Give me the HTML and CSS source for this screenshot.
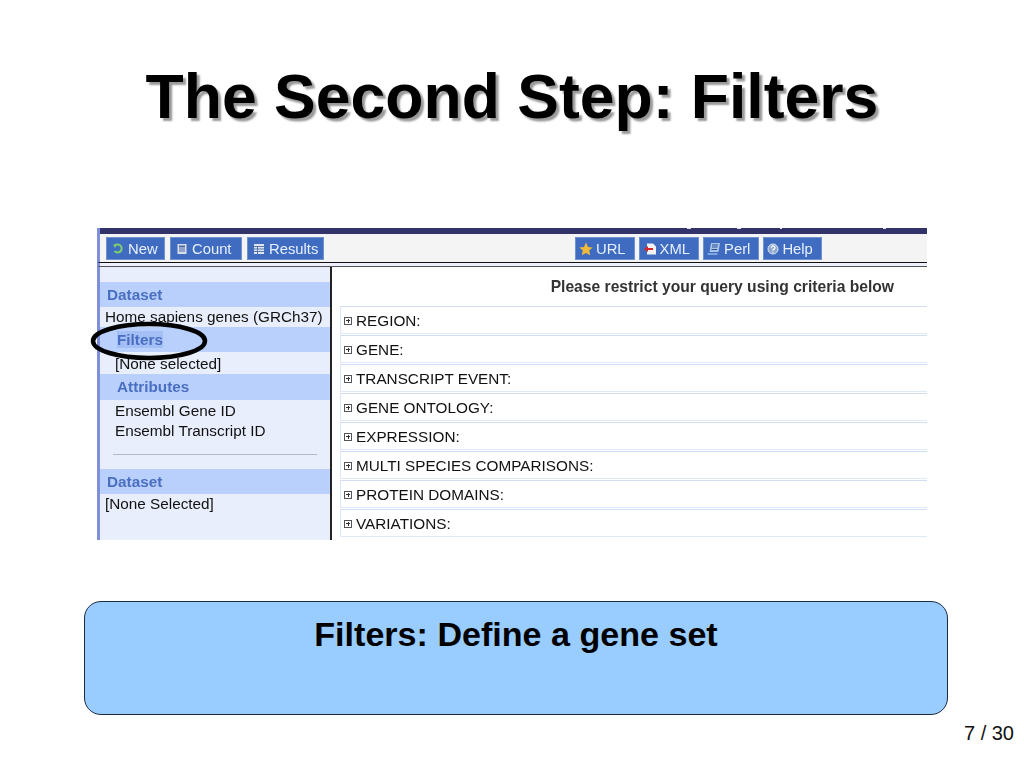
FILE: index.html
```html
<!DOCTYPE html>
<html lang="en">
<head>
  <meta charset="UTF-8" />
  <title>The Second Step: Filters</title>
  <link rel="stylesheet" href="styles.css">
</head>
<body>
  <div class="slide">
    <h1 class="title">The Second Step: Filters</h1>

    <div class="shot">
      <div class="topbar"></div>
      <div class="toolbar">
        <div class="btns">
          <a class="btn btn-new">
            <svg class="ico" viewBox="0 0 12 12"><path d="M3 2.5 A4 4 0 1 1 2.5 8" fill="none" stroke="#7fd06a" stroke-width="2"/><path d="M1 1.5 L5 1.5 L3 5 Z" fill="#7fd06a"/></svg>
            New
          </a>
          <a class="btn btn-count">
            <svg class="ico" viewBox="0 0 12 12"><rect x="1.5" y="1" width="9" height="10" fill="#d8dde8"/><rect x="3" y="2.5" width="6" height="2" fill="#4b6ba8"/><path d="M3 6h6M3 8h6" stroke="#4b6ba8"/></svg>
            Count
          </a>
          <a class="btn btn-results">
            <svg class="ico" viewBox="0 0 12 12"><rect x="1" y="1" width="10" height="10" fill="#dfe4ee"/><path d="M1 3.5h10M1 6h10M1 8.5h10M4.5 3v8" stroke="#5a78b0"/></svg>
            Results
          </a>
        </div>
        <div class="btns btns-right">
          <a class="btn">
            <svg class="ico ico-wide" viewBox="0 0 14 14"><path d="M7 .5 9 5 13.700 5.500 10.200 8.600 11.200 13.300 7 10.900 2.800 13.300 3.800 8.600.3 5.500 5 5Z" fill="#f0b93a"/></svg>
            URL
          </a>
          <a class="btn">
            <svg class="ico ico-wide" viewBox="0 0 14 14"><path d="M4 1.500h6l3 3V12.500H4Z" fill="#f2f2f2"/><path d="M1 7 5 4V10Z M5 6h5v2H5Z" fill="#d8252a"/></svg>
            XML
          </a>
          <a class="btn">
            <svg class="ico ico-wide" viewBox="0 0 14 14"><path d="M4 1h9L11.500 10H2.500Z" fill="#a9c4ea"/><path d="M5 3h6M5 5h5.500M4.500 7.500h5.500" stroke="#2f4f8f"/><path d="M.5 11h10v2H.5Z" fill="#7fa5dc"/></svg>
            Perl
          </a>
          <a class="btn">
            <svg class="ico" viewBox="0 0 12 12"><circle cx="6" cy="6" r="5" fill="#8ea8d0" stroke="#dce5f2"/><path d="M4.300 4.700A1.800 1.800 0 1 1 6 6.500V7.500M6 8.500V9.500" fill="none" stroke="#fff" stroke-width="1.200"/></svg>
            Help
          </a>
        </div>
      </div>
      <div class="strip"></div>

      <div class="cols">
        <div class="side">
          <div class="band band-first">Dataset</div>
          <div class="side-text side-name">Home sapiens genes (GRCh37)</div>
          <div class="band band-sub band-on"><span>Filters</span></div>
          <div class="side-text side-sub side-none">[None selected]</div>
          <div class="band band-sub band-attr">Attributes</div>
          <div class="side-text side-sub side-attr">Ensembl Gene ID<br>Ensembl Transcript ID</div>
          <div class="side-rule"></div>
          <div class="band">Dataset</div>
          <div class="side-text side-name">[None Selected]</div>
        </div>
        <div class="main">
          <div class="restrict">Please restrict your query using criteria below</div>
          <div class="row"><i class="plus"></i>REGION:</div>
          <div class="row"><i class="plus"></i>GENE:</div>
          <div class="row"><i class="plus"></i>TRANSCRIPT EVENT:</div>
          <div class="row"><i class="plus"></i>GENE ONTOLOGY:</div>
          <div class="row"><i class="plus"></i>EXPRESSION:</div>
          <div class="row"><i class="plus"></i>MULTI SPECIES COMPARISONS:</div>
          <div class="row"><i class="plus"></i>PROTEIN DOMAINS:</div>
          <div class="row"><i class="plus"></i>VARIATIONS:</div>
        </div>
      </div>

      <svg class="ring" width="122" height="44" viewBox="0 0 122 44">
        <ellipse cx="61" cy="22" rx="56" ry="17" fill="none" stroke="#000" stroke-width="4.500"/>
      </svg>
    </div>

    <div class="callout">Filters: Define a gene set</div>
    <div class="pagenum">7 / 30</div>
  </div>
</body>
</html>
```

FILE: styles.css
```css
html, body {
  margin: 0;
  padding: 0;
  background-color: #fff;
  color: #000;
  font-family: "Liberation Sans", Arial, sans-serif;
}

.slide {
  width: 1024px;
  height: 768px;
  overflow: hidden;
}

.title {
  margin: 0;
  height: 228px;
  padding-top: 60px;
  box-sizing: border-box;
  font-size: 62.500px;
  line-height: 72px;
  font-weight: bold;
  text-align: center;
  text-shadow: 3px 3px 2px #999;
}

/* browser capture pasted in the slide */
.shot {
  position: relative;
  width: 830px;
  height: 312px;
  margin-left: 97px;
  font-size: 15.300px;
  color: #111;
  filter: blur(0.3px);
}

.topbar {
  height: 6px;
  background-color: #33336b;
  background-image:
    linear-gradient(#dfe0ee, #dfe0ee),
    linear-gradient(#dfe0ee, #dfe0ee),
    linear-gradient(#dfe0ee, #dfe0ee),
    linear-gradient(#dfe0ee, #dfe0ee);
  background-size: 4px 1px, 4px 1px, 2px 1px, 3px 1px;
  background-position: 587px 0, 637px 0, 680px 0, 783px 0;
  background-repeat: no-repeat;
  border-left: 3px solid #7f8fd8;
}

.toolbar {
  display: flex;
  height: 29px;
  padding: 3px 0 0 6px;
  box-sizing: border-box;
  background-color: #f4f4f4;
  border-left: 3px solid #7f8fd8;
  border-bottom: 1px solid #111;
}

.btns {
  display: flex;
  gap: 5px;
}

.btns-right {
  margin-left: 251px;
  gap: 4px;
}

.btn {
  display: flex;
  align-items: center;
  gap: 4px;
  height: 23px;
  padding: 0 0 0 5px;
  box-sizing: border-box;
  background-color: #3f6cc0;
  border: 1px solid #6f93cf;
  font-size: 14.800px;
  color: #e8f0ff;
}

.btn-new {
  width: 59px;
}

.btn-count {
  width: 72px;
}

.btn-results {
  width: 77px;
}

.btns-right .btn {
  gap: 3px;
  padding: 0 8px 0 3px;
}

.ico {
  width: 12px;
  height: 12px;
  flex: none;
}

.ico-wide {
  width: 14px;
  height: 14px;
}

.strip {
  height: 3px;
  background-color: #eef0fb;
  border-left: 3px solid #7f8fd8;
  border-bottom: 1px solid #555;
}

.cols {
  display: flex;
  height: 273px;
}

.side {
  width: 235px;
  flex: none;
  padding-top: 15px;
  box-sizing: border-box;
  background-color: #e8eefc;
  border-left: 3px solid #7f8fd8;
  border-right: 2px solid #222;
}

.band {
  height: 25px;
  padding-left: 7px;
  line-height: 25px;
  background-color: #b8d0fb;
  color: #4a6fc2;
  font-weight: bold;
}

.band-sub {
  padding-left: 17px;
}

.band-attr {
  height: 26px;
  line-height: 26px;
}

.band-on span {
  display: inline-block;
  line-height: 17px;
  background-color: #a3bff5;
}

.side-text {
  color: #111;
}

.side-name {
  height: 20px;
  padding-left: 5px;
  line-height: 20px;
}

.side-sub {
  padding-left: 15px;
}

.side-none {
  height: 22px;
  line-height: 24px;
}

.side-attr {
  padding-top: 1px;
  line-height: 20px;
  height: 41px;
}

.side-rule {
  height: 1px;
  margin: 12px 13px 14px 13px;
  background-color: #b4b8c8;
}

.main {
  flex: 1;
  padding-left: 8px;
  background-color: #fff;
}

.restrict {
  height: 39px;
  padding: 11px 33px 0 0;
  box-sizing: border-box;
  text-align: right;
  font-size: 15.650px;
  font-weight: bold;
  line-height: 17px;
  color: #333;
}

.row {
  display: flex;
  align-items: center;
  gap: 4px;
  height: 28px;
  margin-bottom: 1px;
  padding: 1px 0 0 3px;
  box-sizing: border-box;
  border-top: 1px solid #d0ddf2;
  border-bottom: 1px solid #e0e9f7;
  border-left: 1px solid #dce6f5;
}

.plus {
  width: 6px;
  height: 6px;
  flex: none;
  border: 1px solid #555;
  background:
    linear-gradient(#333, #333) center / 4px 1px no-repeat,
    linear-gradient(#333, #333) center / 1px 4px no-repeat;
}

.ring {
  position: absolute;
  left: -9px;
  top: 91px;
}

.callout {
  width: 864px;
  height: 114px;
  margin: 61px 0 0 84px;
  padding-top: 12px;
  box-sizing: border-box;
  background-color: #99ccff;
  border: 1px solid #1c2c40;
  border-radius: 17px;
  font-size: 34.100px;
  line-height: 40px;
  font-weight: bold;
  text-align: center;
}

.pagenum {
  margin: 6px 10px 0 0;
  font-size: 20px;
  line-height: 24px;
  text-align: right;
  color: #111;
}
```
